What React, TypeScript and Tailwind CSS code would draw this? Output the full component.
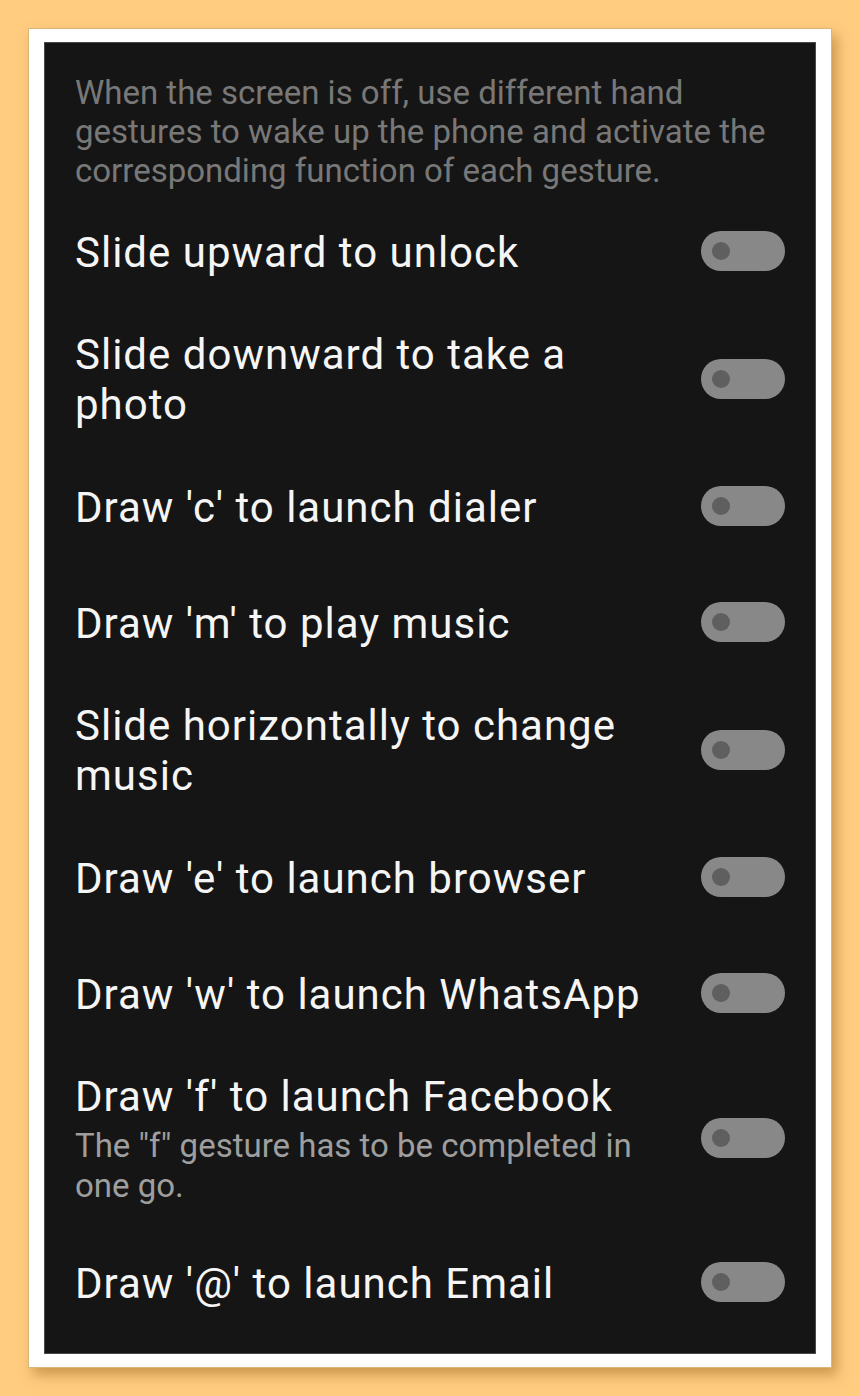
const rows = [
  { title: 'Slide upward to unlock' },
  { title: 'Slide downward to take a photo' },
  { title: "Draw 'c' to launch dialer" },
  { title: "Draw 'm' to play music" },
  { title: 'Slide horizontally to change music' },
  { title: "Draw 'e' to launch browser" },
  { title: "Draw 'w' to launch WhatsApp" },
  { title: "Draw 'f' to launch Facebook", sub: 'The "f" gesture has to be completed in one go.' },
  { title: "Draw '@' to launch Email" },
]

function Toggle() {
  return (
    <div className="flex h-[40px] w-[84px] shrink-0 items-center rounded-full bg-[#888888] pl-[11px]">
      <div className="h-[18px] w-[18px] rounded-full bg-[#5f5f5f]" />
    </div>
  )
}

export default function App() {
  return (
    <div
      className="min-h-[1396px] w-full bg-[#ffcc80] p-[28px]"
      style={{ fontFamily: 'Roboto, "Noto Sans", sans-serif' }}
    >
      <div className="h-[1340px] border border-[#dcb878] bg-white px-[15px] py-[13px] shadow-[5px_7px_12px_rgba(150,100,30,0.5)]">
        <div className="flex h-full flex-col border border-[#4a4a4a] bg-[#151515] px-[30px] pt-[30px]">
          <p className="text-[33px] leading-[39px] text-[#787878]">
            When the screen is off, use different hand gestures to wake up the phone and activate the corresponding function of each gesture.
          </p>
          <div className="mt-[3px] flex flex-col">
            {rows.map((r) => (
              <div key={r.title} className="flex min-h-[116px] items-center gap-8 py-[18px]">
                <div className="flex-1 pt-[3px]">
                  <div className="text-[42px] leading-[50px] tracking-[1px] text-[#f5f5f5]">{r.title}</div>
                  {r.sub && (
                    <div className="mt-[4px] text-[33px] leading-[40px] text-[#9e9e9e]">{r.sub}</div>
                  )}
                </div>
                <Toggle />
              </div>
            ))}
          </div>
        </div>
      </div>
    </div>
  )
}
